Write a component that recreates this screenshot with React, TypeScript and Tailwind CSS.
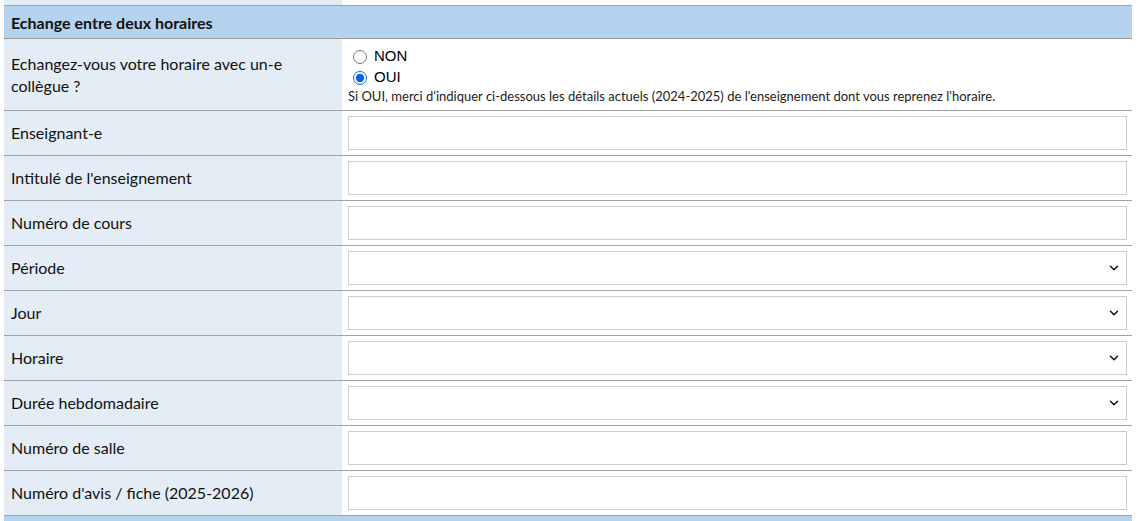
import { ChevronDown } from "lucide-react";

type Field = { label: string; kind: "text" | "select" };

const FIELDS: Field[] = [
  { label: "Enseignant-e", kind: "text" },
  { label: "Intitulé de l'enseignement", kind: "text" },
  { label: "Numéro de cours", kind: "text" },
  { label: "Période", kind: "select" },
  { label: "Jour", kind: "select" },
  { label: "Horaire", kind: "select" },
  { label: "Durée hebdomadaire", kind: "select" },
  { label: "Numéro de salle", kind: "text" },
  { label: "Numéro d'avis / fiche (2025-2026)", kind: "text" },
];

const label = "bg-[#e4edf6] pl-[7px] pr-2 flex items-center text-[16px] text-[#111]";

export default function App() {
  return (
    <div className="min-h-screen bg-white font-['Lato',sans-serif]">
      <div className="ml-[4px] w-[1128px]">
        {/* tail of previous section */}
        <div className="grid grid-cols-[338px_1fr] h-[6px] border-b border-[#a3a3a3]">
          <div className="bg-[#e4edf6]" />
          <div />
        </div>

        <div className="h-[33px] bg-[#b5d3ee] border-b border-[#9a9a9a] flex items-center pl-[7px] pt-[1px] text-[16px] font-bold text-[#111]">
          Echange entre deux horaires
        </div>

        <div className="grid grid-cols-[338px_1fr] h-[72px] border-b border-[#a3a3a3]">
          <div className={`${label} leading-[22px] pt-[1px]`}>
            Echangez-vous votre horaire avec un-e
            <br />
            collègue ?
          </div>
          <div className="pl-[6px] pt-[7px]">
            <label className="flex items-center h-[21px] gap-[7px] pl-[5px] font-['Liberation_Sans',sans-serif] text-[15px] text-black">
              <input type="radio" name="echange" className="m-0 h-[14px] w-[14px] accent-[#0b63d8]" />
              NON
            </label>
            <label className="flex items-center h-[21px] gap-[7px] pl-[5px] font-['Liberation_Sans',sans-serif] text-[15px] text-black">
              <input type="radio" name="echange" defaultChecked className="m-0 h-[14px] w-[14px] accent-[#0b63d8]" />
              OUI
            </label>
            <p className="text-[13px] leading-[16px] text-[#222]">
              Si OUI, merci d'indiquer ci-dessous les détails actuels (2024-2025) de l'enseignement dont vous reprenez l'horaire.
            </p>
          </div>
        </div>

        {FIELDS.map((f) => (
          <div key={f.label} className="grid grid-cols-[338px_1fr] h-[45px] border-b border-[#a3a3a3]">
            <div className={label}>{f.label}</div>
            <div className="flex items-center pl-[6px] pr-[5px]">
              {f.kind === "text" ? (
                <input
                  type="text"
                  className="h-[34px] w-full border border-[#cdcdcd] bg-white px-2 text-[14px] outline-none"
                />
              ) : (
                <div className="relative w-full">
                  <select className="h-[34px] w-full appearance-none border border-[#cdcdcd] bg-white px-2 text-[14px] outline-none">
                    <option value=""></option>
                  </select>
                  <ChevronDown
                    className="pointer-events-none absolute right-[6px] top-1/2 -translate-y-1/2 text-[#1a1a1a]"
                    size={14}
                    strokeWidth={2.75}
                  />
                </div>
              )}
            </div>
          </div>
        ))}

        <div className="h-[10px] bg-[#b5d3ee]" />
      </div>
    </div>
  );
}
